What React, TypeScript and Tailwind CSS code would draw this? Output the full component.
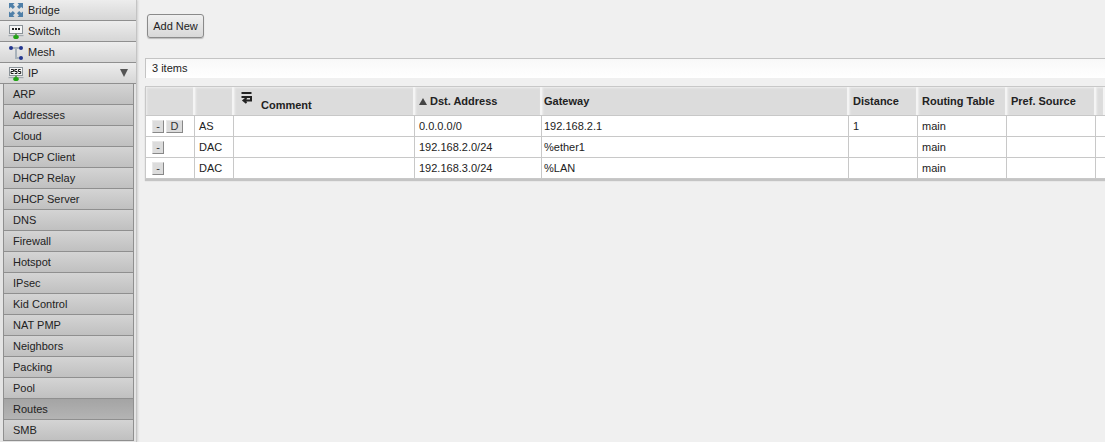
import React from "react";

const NAV = ["ARP","Addresses","Cloud","DHCP Client","DHCP Relay","DHCP Server","DNS","Firewall","Hotspot","IPsec","Kid Control","NAT PMP","Neighbors","Packing","Pool","Routes","SMB"];

const BridgeIcon = () => (
  <svg width="16" height="16" viewBox="0 0 16 16" className="shrink-0">
    <g fill="#4f7fa8">
      <path d="M1 1h5.500L5 2.800 7 4.800 4.800 7 2.800 5 1 6.500z" />
      <path d="M15 1H9.500L11 2.800 9 4.800 11.200 7 13.200 5 15 6.500z" />
      <path d="M1 15h5.500L5 13.200 7 11.200 4.800 9 2.800 11 1 9.500z" />
      <path d="M15 15H9.500L11 13.200 9 11.200 11.200 9 13.200 11 15 9.500z" />
    </g>
  </svg>
);
const Base = () => (
  <>
    <rect x="0.5" y="12" width="15" height="1.2" fill="#a4abb1" />
    <rect x="7" y="10.500" width="2" height="2" fill="#6a9a60" />
    <ellipse cx="8" cy="14" rx="2.800" ry="2" fill="#22a414" />
  </>
);
const SwitchIcon = () => (
  <svg width="16" height="16" viewBox="0 0 16 16" className="shrink-0">
    <rect x="1.500" y="2.500" width="13" height="8" fill="#f6f6f6" stroke="#8a9298" />
    <g fill="#222"><rect x="4" y="5" width="2" height="2" /><rect x="7" y="5" width="2" height="2" /><rect x="10" y="5" width="2" height="2" /></g>
    <Base />
  </svg>
);
const IpIcon = () => (
  <svg width="16" height="16" viewBox="0 0 16 16" className="shrink-0">
    <rect x="1.500" y="2.500" width="13" height="8" fill="#f6f6f6" stroke="#8a9298" />
    <path d="M3 4.500h2.500v2H3v2h2.500M6.800 4.500H9M6.800 4.500v2H9v2H6.800M10.400 4.500h2.300M10.400 4.500v2h2.300v2h-2.300" stroke="#1a1a1a" strokeWidth="1" fill="none" />
    <Base />
  </svg>
);
const MeshIcon = () => (
  <svg width="16" height="16" viewBox="0 0 16 16" className="shrink-0">
    <path d="M3 4h10M8 4v10h5" stroke="#a8b2ba" strokeWidth="2" fill="none" />
    <circle cx="3" cy="4" r="2" fill="#23368f" />
    <circle cx="13" cy="4" r="2" fill="#23368f" />
    <circle cx="13" cy="14" r="2" fill="#23368f" />
  </svg>
);

function TopItem({ icon, label, arrow }: { icon: React.ReactNode; label: string; arrow?: boolean }) {
  return (
    <div className="h-[21px] flex items-center pl-[8px] gap-[4px] border-b border-[#8f8f8f] bg-gradient-to-b from-[#ededed] to-[#d6d6d6] text-[#222]">
      {icon}
      <span>{label}</span>
      {arrow && <span className="ml-auto mr-[8px] w-0 h-0 border-l-[4px] border-r-[4px] border-t-[8px] border-l-transparent border-r-transparent border-t-[#555]" />}
    </div>
  );
}

const COLS = ["w-[49px]","w-[39px]","w-[181px]","w-[127px]","w-[307px]","w-[69px]","w-[89px]","w-[89px]","flex-1"];

function HeadCell({ w, children, items = "items-center", pad = "pl-[4px]" }: { w: string; children?: React.ReactNode; items?: string; pad?: string }) {
  return (
    <div className={`${w} h-full flex ${items} ${pad} border-r-2 border-[#f4f4f4] bg-[#dcdcdc] shadow-[inset_1px_1px_2px_#eeeeee] font-bold whitespace-nowrap`}>
      {children}
    </div>
  );
}
function Cell({ w, children, pad = "pl-[4px]" }: { w: string; children?: React.ReactNode; pad?: string }) {
  return (
    <div className={`${w} h-full flex items-center ${pad} border-r border-[#c8c8c8] whitespace-nowrap`}>{children}</div>
  );
}
const Btn = ({ children, w }: { children: string; w: string }) => (
  <span className={`${w} h-[13px] flex items-center justify-center bg-[#dcdcdc] border border-[#e8e8e8] border-r-[#888] border-b-[#888] text-[11px] leading-none text-[#333]`}>{children}</span>
);

function Row({ first, kind, dst, gw, dist }: { first?: boolean; kind: string; dst: string; gw: string; dist?: string }) {
  return (
    <div className="h-[21px] flex items-center bg-white border-b border-[#c8c8c8]">
      <Cell w={COLS[0]}>
        <span className="flex gap-[2px] pl-[2px]">
          <Btn w="w-[12px]">-</Btn>
          {first && <Btn w="w-[17px]">D</Btn>}
        </span>
      </Cell>
      <Cell w={COLS[1]}>{kind}</Cell>
      <Cell w={COLS[2]} />
      <Cell w={COLS[3]}>{dst}</Cell>
      <Cell w={COLS[4]} pad="pl-[2px]">{gw}</Cell>
      <Cell w={COLS[5]}>{dist}</Cell>
      <Cell w={COLS[6]}>main</Cell>
      <Cell w={COLS[7]} />
      <div className="flex-1" />
    </div>
  );
}

export default function App() {
  return (
    <div className="w-[1105px] h-[442px] overflow-hidden flex bg-[#f0f0f0] text-[11px] text-[#222]" style={{ fontFamily: '"Liberation Sans", Arial, sans-serif' }}>
      <aside className="w-[137px] shrink-0 h-full border-r border-[#c4c4c4] shadow-[1px_0_2px_#d0d0d0] bg-[#e4e4e4] overflow-hidden">
        <TopItem icon={<BridgeIcon />} label="Bridge" />
        <TopItem icon={<SwitchIcon />} label="Switch" />
        <TopItem icon={<MeshIcon />} label="Mesh" />
        <TopItem icon={<IpIcon />} label="IP" arrow />
        <div className="ml-[3px] w-[131px] border-x border-[#8f8f8f]">
          {NAV.map((n) => (
            <div key={n} className={`h-[21px] flex items-center pl-[9px] border-b border-[#8f8f8f] ${n === "Routes" ? "bg-gradient-to-b from-[#a4a4a4] to-[#b4b4b4]" : "bg-gradient-to-b from-[#d4d4d4] to-[#c0c0c0]"}`}>{n}</div>
          ))}
        </div>
      </aside>
      <main className="flex-1 min-w-0 pl-[8px]">
        <div className="pt-[14px] pl-[2px]">
          <button className="h-[24px] w-[57px] rounded-[3px] border border-[#8a8a8a] bg-gradient-to-b from-[#f0f0f0] to-[#d8d8d8] shadow-[0_1px_1px_#bbb] text-[11px] text-[#222] flex items-center justify-center">Add New</button>
        </div>
        <div className="mt-[20px] h-[20px] flex items-center pl-[6px] bg-gradient-to-b from-[#f8f8f8] to-white border-t border-l border-[#c4c4c4]">3 items</div>
        <div className="mt-[8px] border-t border-l border-[#c8c8c8] shadow-[0_2px_1px_#c4c4c4]">
          <div className="h-[29px] flex border-b border-[#c8c8c8]">
            <HeadCell w={COLS[0]} />
            <HeadCell w={COLS[1]} />
            <HeadCell w={COLS[2]} items="items-end">
              <span className="relative pl-[23px] pb-[2px]">
                Comment
                <svg width="11" height="12" viewBox="0 0 11 12" className="absolute left-[3px] -top-[5px]">
                  <path d="M0.500 1h10M0.500 5h9.500v3.500H3M5.500 6 2.500 8.500 5.500 11" stroke="#222" strokeWidth="2" fill="none" />
                </svg>
              </span>
            </HeadCell>
            <HeadCell w={COLS[3]}>
              <span className="w-0 h-0 mr-[3px] border-l-[4px] border-r-[4px] border-b-[7px] border-l-transparent border-r-transparent border-b-[#444]" />
              Dst. Address
            </HeadCell>
            <HeadCell w={COLS[4]} pad="pl-[2px]">Gateway</HeadCell>
            <HeadCell w={COLS[5]}>Distance</HeadCell>
            <HeadCell w={COLS[6]}>Routing Table</HeadCell>
            <HeadCell w={COLS[7]}>Pref. Source</HeadCell>
            <HeadCell w={COLS[8]} />
          </div>
          <Row first kind="AS" dst="0.0.0.0/0" gw="192.168.2.1" dist="1" />
          <Row kind="DAC" dst="192.168.2.0/24" gw="%ether1" />
          <Row kind="DAC" dst="192.168.3.0/24" gw="%LAN" />
        </div>
      </main>
    </div>
  );
}
